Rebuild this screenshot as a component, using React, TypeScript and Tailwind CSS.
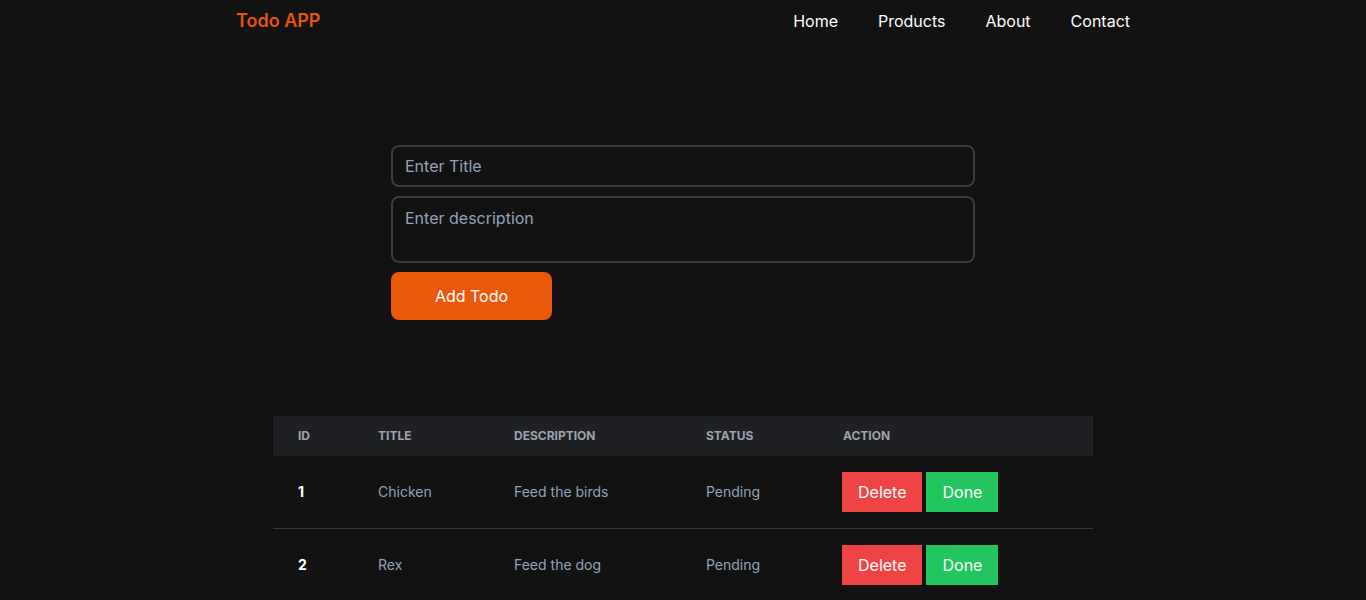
import React, { FC, useState } from 'react';

type Todo = { id: number; title: string; description: string; status: string };

const App: FC = () => {
  const [todos] = useState<Todo[]>([
    { id: 1, title: 'Chicken', description: 'Feed the birds', status: 'Pending' },
    { id: 2, title: 'Rex', description: 'Feed the dog', status: 'Pending' },
  ]);

  return (
    <div className="min-h-screen bg-[#121212] font-['Inter',sans-serif]">
      <nav className="max-w-4xl mx-auto h-[42px] flex items-center justify-between">
        <span className="text-lg font-semibold text-[#e8550c] pl-[1px]">Todo APP</span>
        <ul className="flex gap-10 text-white text-base pr-[1px]">
          <li>Home</li>
          <li>Products</li>
          <li>About</li>
          <li>Contact</li>
        </ul>
      </nav>

      <div className="w-[584px] mx-auto mt-[103px] flex flex-col gap-[9px]">
        <input
          type="text"
          placeholder="Enter Title"
          className="h-[42px] w-full rounded-lg border-2 border-[#3d3d3d] bg-transparent px-3 text-base text-white placeholder:text-[#94a3b8] outline-none"
        />
        <textarea
          placeholder="Enter description"
          className="h-[67px] w-full rounded-lg border-2 border-[#3d3d3d] bg-transparent px-3 py-2 text-base text-white placeholder:text-[#94a3b8] outline-none resize-none"
        />
        <button className="w-[161px] h-[48px] rounded-lg bg-[#ea580c] text-white text-base font-normal">
          Add Todo
        </button>
      </div>

      <div className="w-[820px] mx-auto mt-[96px]">
        <table className="w-full text-sm text-left text-[#94a3b8]">
          <thead className="text-xs uppercase bg-[#1f2023] text-[#9ca3af]">
            <tr>
              <th className="w-[80px] pl-[25px] pr-6 py-3 font-bold">ID</th>
              <th className="w-[136px] pl-[25px] pr-6 py-3 font-bold">Title</th>
              <th className="w-[192px] pl-[25px] pr-6 py-3 font-bold">Description</th>
              <th className="w-[137px] pl-[25px] pr-6 py-3 font-bold">Status</th>
              <th className="pl-[25px] pr-6 py-3 font-bold">Action</th>
            </tr>
          </thead>
          <tbody>
            {todos.map((todo) => (
              <tr key={todo.id} className="border-b border-[#3a3a3a]">
                <td className="pl-[25px] pr-6 py-4 font-bold text-white">{todo.id}</td>
                <td className="pl-[25px] pr-6 py-4">{todo.title}</td>
                <td className="pl-[25px] pr-6 py-4">{todo.description}</td>
                <td className="pl-[25px] pr-6 py-4">{todo.status}</td>
                <td className="pl-6 pr-6 py-4">
                  <div className="flex gap-1">
                    <button className="bg-[#ef4444] text-white text-base px-4 py-2">Delete</button>
                    <button className="bg-[#22c55e] text-white text-base px-4 py-2">Done</button>
                  </div>
                </td>
              </tr>
            ))}
          </tbody>
        </table>
      </div>
    </div>
  );
};

export default App;
